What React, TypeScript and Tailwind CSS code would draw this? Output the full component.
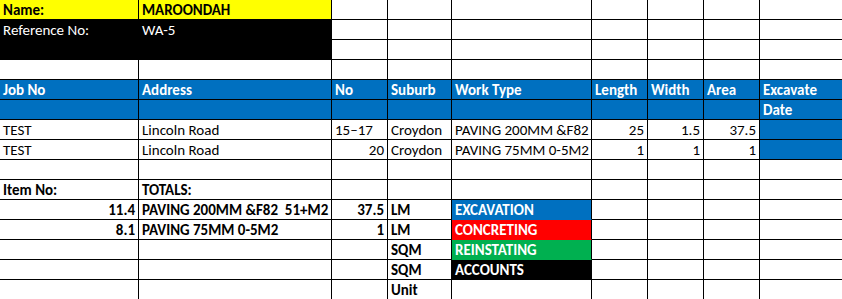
import type { FunctionComponent } from "react";

type Cell = {
  t?: string;
  b?: boolean;
  r?: boolean;
  fill?: "yellow" | "black" | "blue" | "red" | "green";
  joinDown?: boolean;
};

const fillClass = {
  yellow: "bg-[#ffff00] text-black",
  black: "bg-black text-white",
  blue: "bg-[#0070c0] text-white",
  red: "bg-[#ff0000] text-white",
  green: "bg-[#00b050] text-white",
};

const blank = (n: number): Cell[] => Array.from({ length: n }, () => ({}));
const hdr = (t?: string): Cell => ({ t, b: true, fill: "blue" });

const rows: Cell[][] = [
  [{ t: "Name:", b: true, fill: "yellow" }, { t: "MAROONDAH", b: true, fill: "yellow" }, ...blank(7)],
  [{ t: "Reference No:", fill: "black" }, { t: "WA-5", fill: "black" }, ...blank(7)],
  [{ fill: "black" }, { fill: "black" }, ...blank(7)],
  blank(9),
  [hdr("Job No"), hdr("Address"), hdr("No"), hdr("Suburb"), hdr("Work Type"), hdr("Length"), hdr("Width"), hdr("Area"), hdr("Excavate")],
  [hdr(), hdr(), hdr(), hdr(), hdr(), hdr(), hdr(), hdr(), hdr("Date")],
  [
    { t: "TEST" },
    { t: "Lincoln Road" },
    { t: "15–17" },
    { t: "Croydon" },
    { t: "PAVING 200MM &F82" },
    { t: "25", r: true },
    { t: "1.5", r: true },
    { t: "37.5", r: true },
    { fill: "blue" },
  ],
  [
    { t: "TEST" },
    { t: "Lincoln Road" },
    { t: "20", r: true },
    { t: "Croydon" },
    { t: "PAVING 75MM 0-5M2" },
    { t: "1", r: true },
    { t: "1", r: true },
    { t: "1", r: true },
    { fill: "blue" },
  ],
  blank(9),
  [{ t: "Item No:", b: true }, { t: "TOTALS:", b: true }, ...blank(7)],
  [
    { t: "11.4", b: true, r: true },
    { t: "PAVING 200MM &F82  51+M2", b: true },
    { t: "37.5", b: true, r: true },
    { t: "LM", b: true },
    { t: "EXCAVATION", b: true, fill: "blue", joinDown: true },
    ...blank(4),
  ],
  [
    { t: "8.1", b: true, r: true },
    { t: "PAVING 75MM 0-5M2", b: true },
    { t: "1", b: true, r: true },
    { t: "LM", b: true },
    { t: "CONCRETING", b: true, fill: "red", joinDown: true },
    ...blank(4),
  ],
  [{}, {}, {}, { t: "SQM", b: true }, { t: "REINSTATING", b: true, fill: "green", joinDown: true }, ...blank(4)],
  [{}, {}, {}, { t: "SQM", b: true }, { t: "ACCOUNTS", b: true, fill: "black" }, ...blank(4)],
  [{}, {}, {}, { t: "Unit", b: true }, ...blank(5)],
];

const App: FunctionComponent = () => {
  return (
    <div
      className="w-[842px] h-[299px] overflow-hidden bg-white text-black text-[15px]"
      style={{ fontFamily: "Carlito, Calibri, Lato, 'Open Sans', sans-serif" }}
    >
      <div className="grid grid-cols-[139px_193px_56px_64px_140px_56px_56px_56px_1fr] auto-rows-[20px]">
        {rows.map((row, i) =>
          row.map((c, j) => (
            <div
              key={`${i}-${j}`}
              className={`box-border border-b border-black px-[3px] pt-[1px] leading-[19px] whitespace-pre overflow-hidden ${
                j === 8 ? "" : "border-r"
              } ${c.fill ? fillClass[c.fill] : ""} ${c.b ? "font-bold" : ""} ${
                c.r ? "text-right" : ""
              } ${c.joinDown ? "border-b-transparent" : ""}`}
            >
              {c.t}
            </div>
          ))
        )}
      </div>
    </div>
  );
};

export default App;
